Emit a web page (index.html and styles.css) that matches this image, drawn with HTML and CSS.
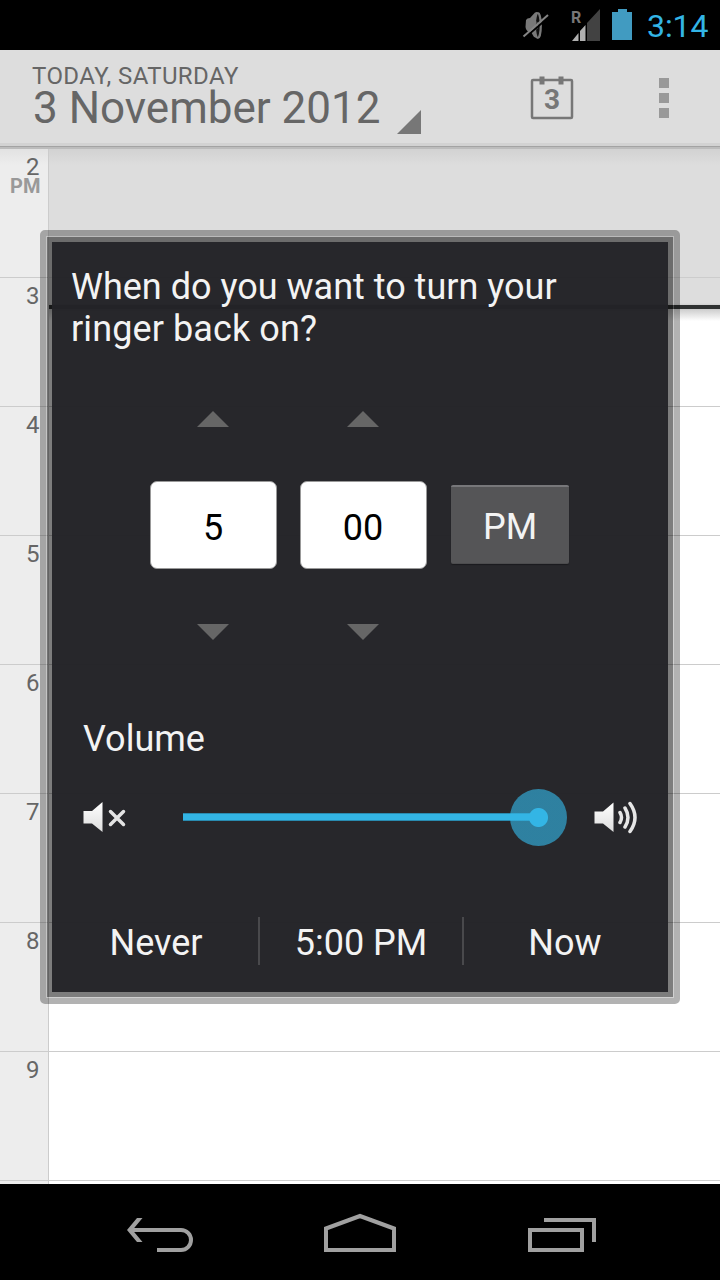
FILE: index.html
```html
<!DOCTYPE html>
<html lang="en">
<head>
<meta charset="utf-8">
<title>Calendar</title>
<link rel="stylesheet" href="styles.css">
</head>
<body>
<div class="screen">
  <div class="status">
    <svg class="status-icons" width="112" height="50" viewBox="0 0 112 50">
      <path d="M4 20Q5 18 8 18L13 12.500L15 12V38L12 37L9 32Q4 32 3.500 27Z" fill="#797979"/>
      <ellipse cx="15.800" cy="25.500" rx="3" ry="12.500" fill="#111" stroke="#797979" stroke-width="2.200"/>
      <path d="M14.500 21Q18 25 14.500 30Z" fill="#797979"/>
      <path d="M2.500 38L27 17" stroke="#000" stroke-width="2"/>
      <path d="M1.500 36.500L26 15" stroke="#858585" stroke-width="2"/>
      <text x="49" y="23" class="roaming">R</text>
      <path d="M78 9V41H65V23Z" fill="#424242"/>
      <path d="M63.500 25V41H58V31Z M56.500 33V41H50Z" fill="#b0b0b0"/>
      <path d="M90 12H96V9H105V12H110V40H90Z" fill="#419bc1"/>
    </svg>
    <span class="clock">3:14</span>
  </div>
  <header class="actionbar">
    <div class="date"><div class="weekday">TODAY, SATURDAY</div><div class="full">3 November 2012</div></div>
    <svg class="spinner" width="24" height="24"><path d="M24 0V24H0Z" fill="#777"/></svg>
    <svg class="today" width="44" height="44" viewBox="0 0 44 44">
      <rect x="2" y="4" width="40" height="38" rx="1" fill="none" stroke="#777" stroke-width="2.500"/>
      <path d="M9.500 0.500h5v8h-5z M28.500 0.500h5v8h-5z" fill="#777"/>
      <text x="22" y="33" text-anchor="middle" class="day">3</text>
    </svg>
    <div class="overflow"><i></i><i></i><i></i></div>
  </header>
  <main class="calendar">
    <div class="row past"><div class="hour">2<b>PM</b></div><div class="slot"></div></div>
    <div class="row"><div class="hour">3</div><div class="slot now"></div></div>
    <div class="row"><div class="hour">4</div><div class="slot"></div></div>
    <div class="row"><div class="hour">5</div><div class="slot"></div></div>
    <div class="row"><div class="hour">6</div><div class="slot"></div></div>
    <div class="row"><div class="hour">7</div><div class="slot"></div></div>
    <div class="row"><div class="hour">8</div><div class="slot"></div></div>
    <div class="row"><div class="hour">9</div><div class="slot"></div></div>
    <div class="row last"><div class="hour"></div><div class="slot"></div></div>
  </main>
  <nav class="navbar">
    <svg width="720" height="96" viewBox="0 0 720 96" fill="none" stroke="#a0a0a0" stroke-width="4">
      <path d="M137 34H142.500L132.500 46L142.500 58H137L127 46Z" fill="#a0a0a0" stroke="none"/>
      <path d="M130 46H181A10 10 0 0 1 181 66H157"/>
      <path d="M326 66V44.500L360 32L394 44.500V66Z"/>
      <path d="M530 46H582V66H530Z M544 36H594V58"/>
    </svg>
  </nav>

  <section class="dialog">
    <div class="frame"><div class="panel">
      <h1>When do you want to turn your<br><span class="line2">ringer back on?</span></h1>
      <div class="picker">
        <div class="wheel">
          <svg width="32" height="16"><path d="M16 0L32 16H0Z" fill="#666"/></svg>
          <div class="field">5</div>
          <svg width="32" height="16"><path d="M0 0H32L16 16Z" fill="#666"/></svg>
        </div>
        <div class="wheel">
          <svg width="32" height="16"><path d="M16 0L32 16H0Z" fill="#666"/></svg>
          <div class="field">00</div>
          <svg width="32" height="16"><path d="M0 0H32L16 16Z" fill="#666"/></svg>
        </div>
        <div class="ampm">PM</div>
      </div>
      <h2>Volume</h2>
      <div class="volume">
        <svg width="44" height="32" viewBox="0 0 44 32">
          <defs><linearGradient id="metal" x1="0" y1="0" x2="0" y2="1"><stop offset="0" stop-color="#fff"/><stop offset="1" stop-color="#ddd"/></linearGradient></defs>
          <path d="M0.500 10H9L19.500 1V31L9 22.500H0.500Z" fill="url(#metal)"/>
          <path d="M27.500 10.500L40.500 23.500M40.500 10.500L27.500 23.500" stroke="#e4e4e4" stroke-width="3.500" stroke-linecap="round"/>
        </svg>
        <div class="slider"><div class="track"></div><div class="thumb"></div></div>
        <svg width="44" height="34" viewBox="0 0 44 34">
          <path d="M0.500 11.500H9L19.500 2.500V32L9 23.500H0.500Z" fill="url(#metal)"/>
          <path d="M26 12.500Q29 17.500 26 22.500M31 8Q37 17.500 31 27M36 3.500Q46 17.500 36 31.500" fill="none" stroke="#e6e6e6" stroke-width="3.500" stroke-linecap="round"/>
        </svg>
      </div>
      <div class="buttons"><div>Never</div><div>5:00 PM</div><div>Now</div></div>
    </div></div>
  </section>
</div>
</body>
</html>
```
FILE: styles.css
```css
* { box-sizing: border-box; }
body { margin: 0; background: #000; font-family: Roboto, "Noto Sans", sans-serif; }
svg { display: block; flex: none; }
.screen { position: relative; width: 720px; height: 1280px; overflow: hidden; display: flex; flex-direction: column; }
.status { height: 50px; flex: none; background: #000; display: flex; justify-content: flex-end; align-items: center; padding-right: 12px; }
.status-icons { margin-right: 13px; }
.roaming { font: bold 16px Roboto, sans-serif; fill: #777; }
.clock { width: 61px; white-space: nowrap; font-size: 32px; line-height: 50px; color: #33b5e5; padding-top: 2px; letter-spacing: -0.1px; }

.actionbar { height: 99px; flex: none; background: linear-gradient(#ddd 93px, #d2d2d2 93px, #d2d2d2 96px, #a3a3a3 96px, #a3a3a3 97px, #bcbcbc 97px); display: flex; align-items: flex-start; padding-left: 32px; color: #666; }
.date { width: 365px; padding-top: 16px; white-space: nowrap; }
.weekday { font-size: 24px; line-height: 20px; letter-spacing: 0.4px; }
.full { font-size: 44px; line-height: 44px; padding-left: 1px; }
.spinner { margin-top: 60px; }
.today { margin: 26px 0 0 109px; }
.day { font: bold 28px Roboto, sans-serif; fill: #777; }
.overflow { margin: 28px 0 0 85px; display: flex; flex-direction: column; gap: 5px; }
.overflow i { width: 10px; height: 10px; background: #999; }

.calendar { height: 1035px; flex: none; overflow: hidden; background: #fff; }
.row { height: 129px; display: flex; }
.hour { width: 49px; border-right: 1px solid #ccc; background: #ededed; border-bottom: 1px solid #ccc; padding: 7px 8.5px 0 0; text-align: right; color: #666; font-size: 24px; line-height: 22px; }
.hour b { display: block; font-size: 20px; line-height: 16px; margin-right: -1px; color: #999; }
.slot { flex: 1; border-bottom: 1px solid #ccc; }
.past .slot { background: linear-gradient(#d2d2d2, #ddd 16px); }
.past .hour { background: linear-gradient(#e2e2e2, #ededed 16px); }
.now { background: linear-gradient(#ddd 25px, #cfcfcf 27px, #2f3131 27px, #2f3131 31px, #ccc 31px, #fff 43px); }
.last { height: 3px; }
.last .hour, .last .slot { border-bottom: 0; }

.navbar { height: 96px; background: #000; }

.dialog { position: absolute; left: 40px; top: 230px; width: 640px; height: 774px; border: 6px solid rgba(0,0,0,.3); border-radius: 5px; }
.frame { height: 762px; border: 1px solid rgba(120,120,120,.35); display: flex; }
.panel { width: 626px; flex: none; border: 5px solid rgba(0,0,0,.51); background: rgba(35,35,39,.98); background-clip: padding-box; color: #f3f3f3; display: flex; flex-direction: column; }
h1 { font-weight: 400; font-size: 36px; line-height: 42px; margin: 24px 0 0 19px; white-space: nowrap; }
.line2 { letter-spacing: 0.1px; }
.picker { height: 230px; margin: 61px 0 0 97px; display: flex; }
.wheel { width: 128px; margin-right: 22px; display: flex; flex-direction: column; align-items: center; }
.field { width: 127px; height: 88px; margin: 54px 0 55px; background: #fff; border: 1px solid #999; border-radius: 7px; color: #000; font-size: 36px; line-height: 92px; text-align: center; }
.ampm { width: 118px; height: 79px; margin: 74px 0 0 2px; background: #555557; border-top: 2px solid #77777a; border-bottom: 1px solid #4c4c4e; border-radius: 2px; text-align: center; font-size: 36px; line-height: 80px; box-shadow: 0 1px 1px #1b1b1e; }
h2 { font-weight: 400; font-size: 36px; line-height: 42px; margin: 77px 0 0 31px; }
.volume { height: 60px; margin: 27px 0 0 31px; display: flex; align-items: center; }
.slider { width: 384px; height: 58px; margin: 0 27px 0 56px; display: flex; align-items: center; }
.track { width: 355px; height: 8px; background: #33b5e5; border: 1px solid #298bb0; border-width: 1px 0; }
.thumb { width: 57px; height: 57px; margin-left: -28.5px; border-radius: 50%; background: radial-gradient(circle, #33b5e5 9px, rgba(51,181,229,.63) 10px); }
.buttons { margin-top: 70px; height: 48px; display: flex; text-align: center; font-size: 36px; line-height: 53px; }
.buttons div { width: 208px; }
.buttons div:nth-child(2) { width: 206px; border: 2px solid #49494c; border-width: 0 2px; margin-left: -2px; }
.buttons div:nth-child(3) { width: 202px; }
```
